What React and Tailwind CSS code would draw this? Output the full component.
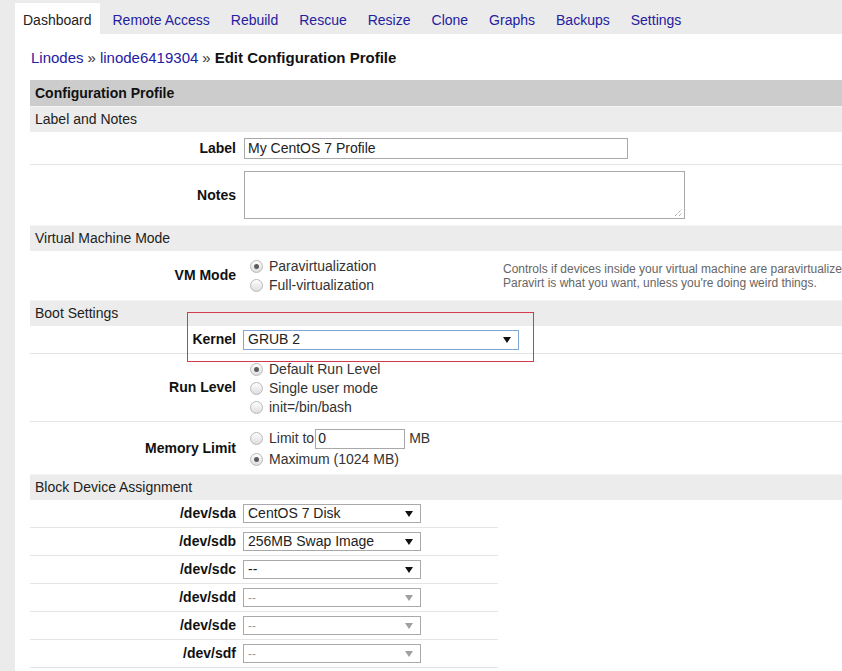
import React from "react";

const TABS = ["Remote Access", "Rebuild", "Rescue", "Resize", "Clone", "Graphs", "Backups", "Settings"];

function Arrow({ disabled }) {
  return (
    <svg width="8" height="6" viewBox="0 0 8 6">
      <polygon points="0,0 8,0 4,6" fill={disabled ? "#a0a0a0" : "#111"} />
    </svg>
  );
}

function Radio({ checked }) {
  return (
    <span className="flex h-[13px] w-[13px] shrink-0 items-center justify-center rounded-full border border-[#b9b9b9] bg-linear-to-b from-[#fefefe] to-[#dedede]">
      {checked && <span className="h-[5px] w-[5px] rounded-full bg-[#5c5c5c]" />}
    </span>
  );
}

function RadioLine({ checked, children }) {
  return (
    <div className="flex h-[19px] items-center gap-[6px] pl-[6px] text-[#333]">
      <Radio checked={checked} />
      <span>{children}</span>
    </div>
  );
}

function Row({ label, h, children, className = "" }) {
  return (
    <div className={"flex items-center border-b border-[#e4e4e4] " + h + " " + className}>
      <div className="w-[214px] shrink-0 pr-[8px] text-right font-bold text-[#111]">{label}</div>
      {children}
    </div>
  );
}

function Section({ children }) {
  return <div className="flex h-[26px] items-center border-t border-[#f4f4f4] bg-[#ececec] pl-[5px] text-[#222]">{children}</div>;
}

function DevSelect({ value, disabled }) {
  return (
    <div className="flex h-[19px] w-[178px] items-center justify-between border border-[#a9a9a9] bg-white pl-[4px] pr-[7px]">
      <span className={disabled ? "text-[12px] text-[#9a9a9a]" : "text-[#222]"}>{value}</span>
      <Arrow disabled={disabled} />
    </div>
  );
}

const DEVICES = [
  ["/dev/sda", "CentOS 7 Disk", false],
  ["/dev/sdb", "256MB Swap Image", false],
  ["/dev/sdc", "--", false],
  ["/dev/sdd", "--", true],
  ["/dev/sde", "--", true],
  ["/dev/sdf", "--", true],
];

export default function App() {
  return (
    <div className="h-[671px] w-[842px] overflow-hidden bg-[#ebebeb] font-['Liberation_Sans',Arial,sans-serif] text-[14px] leading-normal text-[#222]">
      {/* Tabs */}
      <div className="flex h-[34px] items-end gap-[1px] pl-[15px]">
        <div className="flex h-[31px] items-center bg-white px-[8px] pt-[3px] text-[#222]">Dashboard</div>
        <div className="w-[1px]" />
        {TABS.map((t) => (
          <div key={t} className="flex h-[31px] items-center px-[10px] pt-[3px] text-[#24209f]">
            {t}
          </div>
        ))}
      </div>

      <div className="ml-[15px] h-[637px] bg-white pl-[15px]">
        {/* Breadcrumb */}
        <div className="flex h-[46px] items-center pl-[1px] pt-[2px] text-[15px]">
          <span className="text-[#24209f]">Linodes</span>
          <span className="px-[4px] text-[#333]">»</span>
          <span className="text-[#24209f]">linode6419304</span>
          <span className="px-[4px] text-[#333]">»</span>
          <span className="font-bold text-[#111]">Edit Configuration Profile</span>
        </div>

        <div className="relative w-[900px]">
          <div className="flex h-[26px] items-center bg-[#cccccc] pl-[5px] font-bold text-[#111]">Configuration Profile</div>

          <Section>Label and Notes</Section>
          <Row label="Label" h="h-[33px]">
            <div className="flex h-[21px] w-[384px] items-center border border-[#a9a9a9] pl-[3px] text-[#222]">My CentOS 7 Profile</div>
          </Row>
          <div className="flex h-[60px] items-center">
            <div className="w-[214px] shrink-0 pr-[8px] text-right font-bold text-[#111]">Notes</div>
            <div className="relative h-[48px] w-[441px] border border-[#a9a9a9]">
              <svg className="absolute bottom-[1px] right-[1px]" width="9" height="9" viewBox="0 0 9 9">
                <line x1="1" y1="8" x2="8" y2="1" stroke="#888" strokeWidth="1" strokeDasharray="1 1" />
                <line x1="5" y1="8" x2="8" y2="5" stroke="#888" strokeWidth="1" strokeDasharray="1 1" />
              </svg>
            </div>
          </div>

          <Section>Virtual Machine Mode</Section>
          <div className="flex h-[49px] items-center">
            <div className="w-[214px] shrink-0 pr-[8px] text-right font-bold text-[#111]">VM Mode</div>
            <div className="w-[259px] shrink-0 pt-[1px]">
              <RadioLine checked>Paravirtualization</RadioLine>
              <RadioLine>Full-virtualization</RadioLine>
            </div>
            <div className="text-[12px] leading-[14px] whitespace-nowrap text-[#666]">
              <div>Controls if devices inside your virtual machine are paravirtualized or fully virtualized.</div>
              <div>Paravirt is what you want, unless you're doing weird things.</div>
            </div>
          </div>

          <Section>Boot Settings</Section>
          <Row label="Kernel" h="h-[28px]">
            <div className="-ml-[1px] flex h-[20px] w-[276px] items-center justify-between border border-[#82a5d8] pl-[4px] pr-[7px] text-[#222]">
              <span>GRUB 2</span>
              <Arrow />
            </div>
          </Row>
          <Row label="Run Level" h="h-[68px]">
            <div className="pt-[2px]">
              <RadioLine checked>Default Run Level</RadioLine>
              <RadioLine>Single user mode</RadioLine>
              <RadioLine>init=/bin/bash</RadioLine>
            </div>
          </Row>
          <div className="flex h-[52px] items-center">
            <div className="w-[214px] shrink-0 pr-[8px] text-right font-bold text-[#111]">Memory Limit</div>
            <div>
              <div className="flex h-[22px] items-center gap-[6px] pl-[6px] text-[#333]">
                <Radio />
                <span>Limit to</span>
                <div className="-ml-[5px] flex h-[20px] w-[90px] items-center border border-[#a9a9a9] pl-[2px] text-[#222]">0</div>
                <span className="ml-[-2px]">MB</span>
              </div>
              <RadioLine checked>Maximum (1024 MB)</RadioLine>
            </div>
          </div>

          <Section>Block Device Assignment</Section>
          <div className="w-[468px]">
            {DEVICES.map(([dev, val, dis]) => (
              <Row key={dev} label={dev} h="h-[28px]">
                <div className="-ml-[1px]">
                  <DevSelect value={val} disabled={dis} />
                </div>
              </Row>
            ))}
          </div>

          {/* red highlight box around kernel */}
          <div className="pointer-events-none absolute left-[157px] top-[232px] h-[50px] w-[347px] border border-[#d23a4e]" />
        </div>
      </div>
    </div>
  );
}
